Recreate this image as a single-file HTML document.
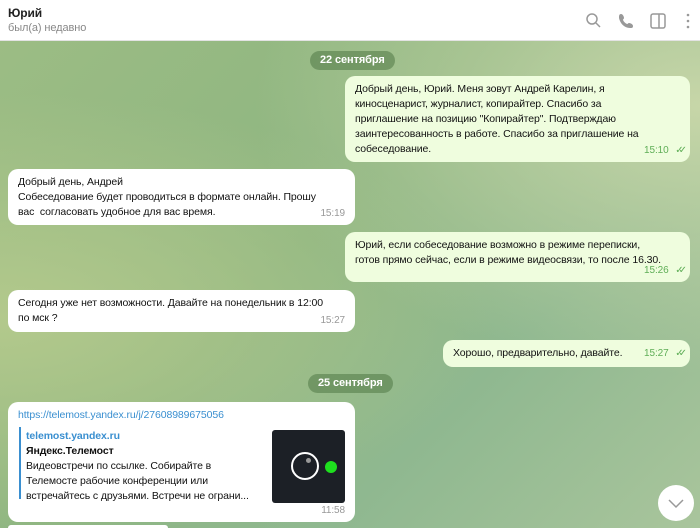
<!DOCTYPE html>
<html><head><meta charset="utf-8"><style>
*{margin:0;padding:0;box-sizing:border-box}
html,body{width:700px;height:528px;overflow:hidden}
body{font-family:"Liberation Sans",sans-serif;font-size:10.5px;letter-spacing:-0.1px;color:#111;position:relative;
background:radial-gradient(ellipse at 100% 20%,#c7d6a8 0%,transparent 45%),radial-gradient(ellipse at 0% 60%,#b3c98c 0%,transparent 50%),linear-gradient(135deg,#9dbd84 0%,#8db581 45%,#8fb890 70%,#a9c59c 100%);}
.hdr{position:absolute;top:0;left:0;width:700px;height:41px;background:#fff;border-bottom:1px solid #e3e3e3}
.hdr .n{position:absolute;left:8px;top:6px;font-size:12px;font-weight:bold;color:#222}
.hdr .s{position:absolute;left:8px;top:22px;font-size:11px;color:#888}
.b{position:absolute;border-radius:10px;padding:6px 10px;line-height:15px;white-space:nowrap}
.o{background:#effdde}
.i{background:#fff}
.t{position:absolute;right:10px;bottom:4px;font-size:10px;color:#999}
.o .t{color:#5fae57;right:8px}
.d{position:absolute;height:19px;line-height:19px;padding:0 10px;border-radius:10px;background:rgba(80,120,70,.55);color:#fff;font-size:11px;font-weight:bold}
.ck{display:inline-block;margin-left:4px;letter-spacing:-5px}
</style></head><body>
<div class="hdr"><div class="n">Юрий</div><div class="s">был(а) недавно</div>
<svg style="position:absolute;left:584px;top:11px" width="110" height="20" fill="none" stroke="#999" stroke-width="1.5">
<circle cx="8" cy="8" r="5"/><line x1="12" y1="12" x2="16" y2="16"/>
<path d="M37 3c2 0 3 3 3 4s-1 1-1 2c1 2 2 3 4 4 1 0 1-1 2-1s4 1 4 3-1 2-3 2C40 17 36 12 35 7c0-2 0-4 2-4z" fill="#999" stroke="none"/>
<rect x="67" y="3" width="14" height="14" rx="2"/><line x1="75" y1="3" x2="75" y2="17"/>
<circle cx="104" cy="4" r="1.3" fill="#999" stroke="none"/><circle cx="104" cy="10" r="1.3" fill="#999" stroke="none"/><circle cx="104" cy="16" r="1.3" fill="#999" stroke="none"/>
</svg></div>
<div class="d" style="left:310px;top:51px">22 сентября</div>
<div class="b o" style="left:345px;top:76px;width:345px;height:86px">Добрый день, Юрий. Меня зовут Андрей Карелин, я<br>киносценарист, журналист, копирайтер. Спасибо за<br>приглашение на позицию "Копирайтер". Подтверждаю<br>заинтересованность в работе. Спасибо за приглашение на<br>собеседование.<span class="t">15:10 <span class="ck">✓✓</span></span></div>
<div class="b i" style="left:8px;top:169px;width:347px;height:56px">Добрый день, Андрей<br>Собеседование будет проводиться в формате онлайн. Прошу<br>вас &nbsp;согласовать удобное для вас время.<span class="t">15:19</span></div>
<div class="b o" style="left:345px;top:232px;width:345px;height:50px">Юрий, если собеседование возможно в режиме переписки,<br>готов прямо сейчас, если в режиме видеосвязи, то после 16.30.<span class="t">15:26 <span class="ck">✓✓</span></span></div>
<div class="b i" style="left:8px;top:290px;width:347px;height:42px">Сегодня уже нет возможности. Давайте на понедельник в 12:00<br>по мск ?<span class="t">15:27</span></div>
<div class="b o" style="left:443px;top:340px;width:247px;height:27px;padding-top:6px">Хорошо, предварительно, давайте.<span class="t" style="bottom:6px">15:27 <span class="ck">✓✓</span></span></div>
<div class="d" style="left:308px;top:374px">25 сентября</div>
<div class="b i" style="left:8px;top:402px;width:347px;height:120px">
<div style="color:#3a8fd0">https://telemost.yandex.ru/j/27608989675056</div>
<div style="position:absolute;left:11px;top:25px;width:2px;height:72px;background:#3a8fd0"></div>
<div style="position:absolute;left:18px;top:27px;line-height:15px">
<div style="color:#3a8fd0;font-weight:bold">telemost.yandex.ru</div>
<div style="font-weight:bold">Яндекс.Телемост</div>
<div>Видеовстречи по ссылке. Собирайте в<br>Телемосте рабочие конференции или<br>встречайтесь с друзьями. Встречи не ограни...</div></div>
<div style="position:absolute;left:264px;top:28px;width:73px;height:73px;border-radius:3px;background:#1c2026">
<div style="position:absolute;left:19px;top:22px;width:28px;height:28px;border:2px solid #fff;border-radius:50%"></div>
<div style="position:absolute;left:34px;top:28px;width:5px;height:5px;background:#999;border-radius:50%"></div>
<div style="position:absolute;left:53px;top:31px;width:12px;height:12px;background:#1ee01e;border-radius:50%"></div></div>
<span class="t">11:58</span></div>
<div style="position:absolute;left:8px;top:525px;width:160px;height:3px;background:#fff;border-radius:8px 8px 0 0"></div>
<div style="position:absolute;left:658px;top:485px;width:36px;height:36px;border-radius:50%;background:#fff">
<svg width="36" height="36" fill="none" stroke="#999" stroke-width="1.5"><path d="M11 15l7 7 7-7"/></svg></div>
</body></html>
